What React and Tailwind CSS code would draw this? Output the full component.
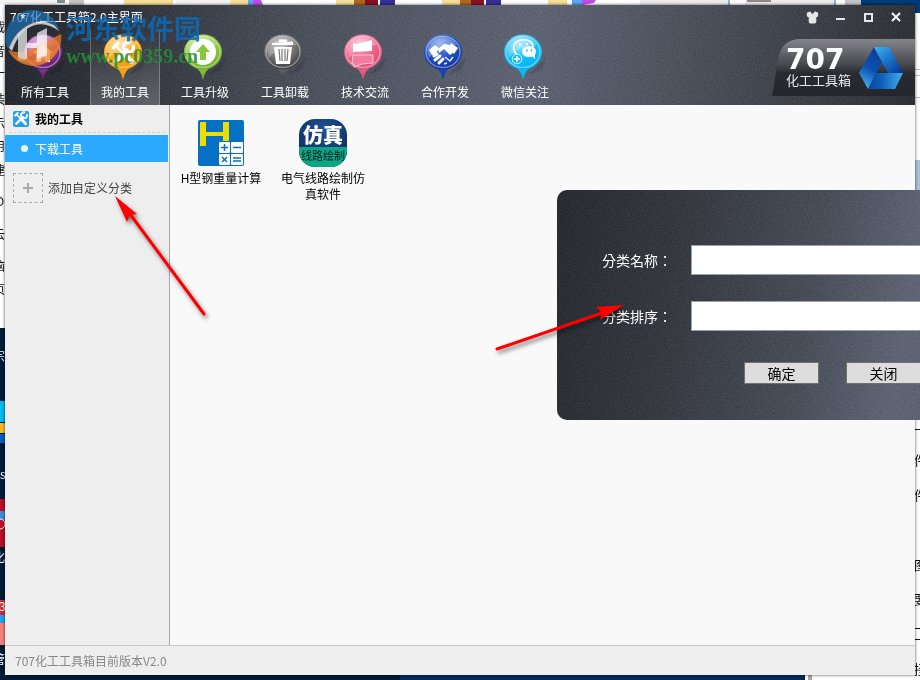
import React, { useState } from "react";
import { Shirt } from "lucide-react";

const pins = [
  { label: "所有工具", light: "#d9a6dd", main: "#8e3a98", dark: "#5d1c68", glyph: "home" },
  { label: "我的工具", light: "#ffd98a", main: "#fba81c", dark: "#f09a08", glyph: "tools" },
  { label: "工具升级", light: "#d5eda0", main: "#8cc63f", dark: "#6fae28", glyph: "up" },
  { label: "工具卸载", light: "#b5b5b5", main: "#6c6c6c", dark: "#3c3c3c", glyph: "trash" },
  { label: "技术交流", light: "#fbb6c9", main: "#ec5f88", dark: "#d9507a", glyph: "chat" },
  { label: "合作开发", light: "#7f9fe8", main: "#1f4fc4", dark: "#12329a", glyph: "hands" },
  { label: "微信关注", light: "#9be6ff", main: "#14bdf8", dark: "#00b4f5", glyph: "wechat" },
];

const tools = [
  { name: "H型钢重量计算", icon: <SteelIcon /> },
  { name: "电气线路绘制仿真软件", icon: <CircuitIcon /> },
];

function Wrenches({ color }) {
  return (
    <g fill="none" stroke={color} strokeLinecap="round">
      <path d="M5 5L14 14" strokeWidth="2.4" />
      <path d="M14 14L19 19" strokeWidth="4.4" />
      <path d="M15 9L5 19" strokeWidth="3.6" />
      <path d="M3 7l4-4" strokeWidth="3" />
      <path d="M21 6a4.500 4.500 0 1 1-4-4" strokeWidth="3" />
    </g>
  );
}

function PinGlyph({ name }) {
  if (name === "home")
    return <path d="M13 20L23 11l10 9h-3v9h-5v-6h-4v6h-5v-9z" fill="#fff" />;
  if (name === "tools")
    return <g transform="translate(10 7) scale(1.12)"><Wrenches color="#fff" /></g>;
  if (name === "up")
    return (
      <g>
        <circle cx="23" cy="19" r="13" fill="#fff" />
        <path d="M23 11l7 8h-4v8h-6v-8h-4z" fill="#8cc63f" />
      </g>
    );
  if (name === "trash")
    return (
      <g>
        <path d="M12 10l21-1.500v3.500H12zM19 9V6.500h8V9" fill="#fff" />
        <path d="M14 14h18l-2 17H16z" fill="#fff" />
        <path d="M19 16l1 12M22 16v12M25 16v12M28 16l-1 12" stroke="#777" strokeWidth="1.200" />
      </g>
    );
  if (name === "chat")
    return (
      <g>
        <path d="M13 10l4 1 15-4v11l-19 1z" fill="#fff" />
        <path d="M13 22h20v8l-11 1-8 3v-3h-2z" fill="#f27c9e" stroke="#ffc7d6" />
      </g>
    );
  if (name === "hands")
    return (
      <g>
        <path d="M9 17l6-5 4 3-4 8-3-1z" fill="#fff" />
        <path d="M31 10l7 5-4 6-5-6z" fill="#fff" />
        <path d="M18 16l6-5 6 1 4 7-4 3-6-6-5 4z" fill="#fff" />
        <path d="M14 23l3-2M15 27l5-4M19 30l4-4" stroke="#fff" strokeWidth="3" strokeLinecap="round" />
        <path d="M24 31l3-1M25 24l5 4 3-4" stroke="#dfe8ff" strokeWidth="1.500" fill="none" />
      </g>
    );
  return (
    <g>
      <path d="M17 21c-5-3-5-12 4-14 7-1 12 2 12 7" fill="none" stroke="#fff" strokeWidth="1.600" />
      <circle cx="20" cy="12" r="1.200" fill="#fff" />
      <circle cx="27" cy="11" r="1.200" fill="#fff" />
      <ellipse cx="29" cy="18.500" rx="7" ry="5.500" fill="#fff" />
      <path d="M31 22l4 4v-5z" fill="#fff" />
      <circle cx="27" cy="17.500" r="1" fill="#14bdf8" />
      <circle cx="31.500" cy="17.500" r="1" fill="#14bdf8" />
      <circle cx="17" cy="26" r="4.800" fill="#14bdf8" stroke="#d5f4ff" />
      <path d="M14 26h6M17 23v6" stroke="#fff" strokeWidth="1.400" />
    </g>
  );
}

function Pin({ pin }) {
  const id = "pin-" + pin.glyph;
  return (
    <svg width="50" height="48" viewBox="0 0 50 48" aria-hidden="true">
      <defs>
        <radialGradient id={id} cx="42%" cy="25%" r="75%">
          <stop offset="0" stopColor={pin.light} />
          <stop offset="0.600" stopColor={pin.main} />
          <stop offset="1" stopColor={pin.dark} />
        </radialGradient>
        <linearGradient id={id + "-tail"} x1="0" y1="0" x2="0" y2="1">
          <stop offset="0" stopColor={pin.main} />
          <stop offset="1" stopColor={pin.dark} />
        </linearGradient>
      </defs>
      <path d="M28 42l18-18-4 13z" fill="#000" opacity="0.120" />
      <path d="M14 34q7 2 9 13q2-11 9-13z" fill={"url(#" + id + "-tail)"} />
      <ellipse cx="23" cy="19" rx="19" ry="17.500" fill={"url(#" + id + ")"} />
      <ellipse cx="23" cy="19" rx="17" ry="15.500" fill="none" stroke="#fff" strokeOpacity="0.400" strokeWidth="1.400" />
      <path d="M7 18a16 14 0 0 1 30-6Q20 12 9 25z" fill="#fff" opacity="0.250" />
      <PinGlyph name={pin.glyph} />
    </svg>
  );
}

function SteelIcon() {
  return (
    <svg width="46" height="46" viewBox="0 0 46 46" aria-hidden="true">
      <rect width="46" height="46" rx="2" fill="#0670c5" />
      <path d="M2 2h6v10h17V2h6v19h-6v-5H8v10H2z" fill="#efdc00" />
      <g fill="#fff">
        <rect x="21" y="22" width="11" height="11" rx="1" />
        <rect x="33" y="22" width="12" height="11" rx="1" />
        <rect x="21" y="34" width="11" height="11" rx="1" />
        <rect x="33" y="34" width="12" height="11" rx="1" />
      </g>
      <path d="M23 27.500h7M26.500 24v7M35 27.500h8M24 37l5 5M29 37l-5 5M35 38h8M35 41h8" stroke="#0670c5" strokeWidth="1.500" />
    </svg>
  );
}

function CircuitIcon() {
  return (
    <span className="flex h-12 w-12 flex-col overflow-hidden rounded-2xl bg-[radial-gradient(circle_at_50%_20%,#1d5090,#0c2450)] text-center">
      <span className="h-7 pt-1 text-[20px] leading-6 font-black text-white">仿真</span>
      <span className="flex-1 bg-[#09a884] text-[11px] leading-4 font-medium whitespace-nowrap text-[#12302f]">线路绘制</span>
    </span>
  );
}

// fine grain laid over the dark metal panels
function Grain() {
  return (
    <svg className="pointer-events-none absolute inset-0 h-full w-full opacity-35 mix-blend-soft-light" aria-hidden="true">
      <filter id="grain">
        <feTurbulence type="fractalNoise" baseFrequency="0.700" numOctaves="2" />
        <feColorMatrix values="1 0 0 0 0  1 0 0 0 0  1 0 0 0 0  0 0 0 0 1" />
      </filter>
      <rect width="100%" height="100%" filter="url(#grain)" />
    </svg>
  );
}

function BrandLogo() {
  return (
    <div className="relative mt-[10px] ml-auto flex h-[57px] w-[143px] shrink-0 items-center">
      <svg className="absolute inset-0" width="143" height="57" viewBox="0 0 143 57" aria-hidden="true">
        <defs>
          <linearGradient id="plate" x1="0" y1="0" x2="0" y2="1">
            <stop offset="0" stopColor="#85868b" />
            <stop offset="0.450" stopColor="#46484e" />
            <stop offset="0.600" stopColor="#2a2b31" />
            <stop offset="1" stopColor="#25262b" />
          </linearGradient>
        </defs>
        <path d="M0 57L7 16Q11 1 27 0H143V57z" fill="url(#plate)" />
      </svg>
      <div className="relative ml-[14px] flex w-[63px] flex-col text-white">
        <span className="font-['DejaVu_Sans',sans-serif] text-[28px] leading-6 font-bold">707</span>
        <span className="text-[13px] leading-4 whitespace-nowrap text-gray-200">化工工具箱</span>
      </div>
      <svg className="relative ml-[10px]" width="44" height="44" viewBox="0 0 44 44" aria-hidden="true">
        <defs>
          <linearGradient id="tri-left" x1="0.600" y1="0" x2="0.300" y2="1">
            <stop offset="0" stopColor="#0a3f9c" />
            <stop offset="0.500" stopColor="#0c50b0" />
            <stop offset="1" stopColor="#43b4ee" />
          </linearGradient>
          <linearGradient id="tri-right" x1="0" y1="0" x2="1" y2="1">
            <stop offset="0" stopColor="#45b4ee" />
            <stop offset="0.500" stopColor="#1873cc" />
            <stop offset="1" stopColor="#04308c" />
          </linearGradient>
          <linearGradient id="tri-base" x1="0" y1="0" x2="1" y2="0">
            <stop offset="0" stopColor="#0b43a2" />
            <stop offset="0.400" stopColor="#1260bd" />
            <stop offset="1" stopColor="#43b0ec" />
          </linearGradient>
        </defs>
        <path d="M15 1L0 27l9 16L23 16z" fill="url(#tri-left)" />
        <path d="M15 1h15l14 26H29z" fill="url(#tri-right)" />
        <path d="M17 27h27l-8 16H9z" fill="url(#tri-base)" />
      </svg>
    </div>
  );
}

// slivers of the desktop that stay visible around the window
function Desktop() {
  const left = [[32, "载"], [56, "音"], [78, "一"], [104, "装"], [128, "示"], [151, "用"], [175, "建"], [239, "云"], [271, "脑"], [294, "页"]];
  const right = [[465, "件"], [500, "件"], [570, "图"], [604, "要"], [674, "接"]];
  return (
    <svg className="absolute inset-0 h-full w-full" aria-hidden="true">
      <rect width="100%" height="100%" fill="#fff" />
      <rect y="328" width="805" height="352" fill="#001a38" />
      <rect x="400" y="675" width="404" height="5" fill="#002b5c" />
      <path d="M808 675h4v5h-4z" fill="#aaa" />
      <path d="M0 0h56v5H0zM176 0h54v5h-54z" fill="#f3f3f3" />
      <path d="M57 0h8v3h-8z" fill="#7d8c96" />
      <path d="M69 0h15v5H69z" fill="#c4c4c4" />
      <path d="M124 0h49v5h-49zM230 0h18v5h-18zM336 0h18v5h-18zM442 0h18v5h-18zM548 0h19v5h-19z" fill="#f8df97" />
      <path d="M248 0h5v5h-5zM572 0h10v5h-10z" fill="#5aa5f5" />
      <path d="M253 0h8l2 5h-10zM582 0h14l-2 3-12 2z" fill="#c04be8" />
      <path d="M354 0h11v5h-11zM460 0h11v5h-11z" fill="#b5651d" />
      <path d="M365 0h13v5h-13zM471 0h13v5h-13z" fill="#8b0f22" />
      <path d="M380 0h15v5h-15zM486 0h15v5h-15z" fill="#34309a" />
      <path d="M640 0h90v5h-90zM745 0h90v5h-90z" fill="#ececec" />
      <path d="M747 0h24v2h-24z" fill="#8a8a8a" />
      <path d="M845 0h16v5h-16z" fill="#c4c4c4" />
      <path d="M728 0h2v5h-2zM834 0h2v5h-2z" fill="#8fb0d0" />
      <rect x="861" width="59" height="13" fill="#003b78" />
      <path d="M915 69.500h5M915 75.500h5M915 97.500h5" stroke="#bbb" />
      <path d="M915 429.500h5M915 628.500h5M915 639.500h5" stroke="#111" />
      <rect x="915" y="160" width="5" height="30" fill="#a9c0d8" />
      <rect y="401" width="5" height="21" fill="#00baf2" />
      <rect y="423" width="5" height="10" fill="#f5b72b" />
      <rect y="434" width="5" height="9" fill="#0a5bc0" />
      <rect y="499" width="5" height="48" fill="#b90f29" />
      <rect y="511" width="5" height="9" fill="#3d8bd7" />
      <circle cx="0" cy="524" r="5" fill="#b90f29" stroke="#fff" />
      <rect y="600" width="5" height="15" fill="#cf2f3c" />
      <rect y="615" width="5" height="8" fill="#22a2ef" />
      <rect y="623" width="5" height="22" fill="#f5817f" />
      {left.map(([y, t]) => <text key={y} x="-7" y={y} fontSize="12" fill="#111">{t}</text>)}
      <text x="-4" y="206" fontSize="12" fill="#111">D</text>
      <g fill="#fff" fontSize="12">
        <text x="-7" y="361">宗</text>
        <text x="0" y="479">s</text>
        <text x="-7" y="562">化</text>
        <text x="-1" y="611">3</text>
        <text x="-7" y="664">管</text>
      </g>
      {right.map(([y, t]) => <text key={y} x="914" y={y} fontSize="13" fill="#111">{t}</text>)}
    </svg>
  );
}

function Watermark() {
  return (
    <div className="pointer-events-none absolute top-[10px] left-[5px] flex opacity-85" aria-hidden="true">
      <svg width="57" height="58" viewBox="0 0 57 58">
        <path d="M3 40Q14 45 28 38T56 24A28 28 0 0 1 3 40z" fill="#f07c1c" opacity="0.850" />
        <path d="M1 33A27.500 27.500 0 0 1 55 22Q50 12 37 11Q14 13 4 38Q1 38 1 33z" fill="#1a72b8" opacity="0.800" />
        <path d="M4 38Q13 14 37 11Q50 13 54 21Q42 12 30 15Q14 20 7 41z" fill="#fff" opacity="0.850" />
        <path d="M13 24l9-6v31q-5 3-9 1zM32 23l10-5v29q-5 4-10 5zM22 33h10v5H22z" fill="#fff" opacity="0.800" />
        <path d="M4 41Q16 52 30 50Q46 46 55 33Q50 54 29 55Q12 54 4 41z" fill="#f58a2c" opacity="0.700" />
        <path d="M18 3l1 2 2 0-2 2 1 2-2-1-2 1 1-2-2-2 2 0z" fill="#d8ecfa" />
      </svg>
      <div className="ml-1 flex flex-col">
        <span className="mt-[2px] text-[27px] leading-8 font-bold text-[#0b69b5]">河东软件园</span>
        <span className="font-['Liberation_Serif',serif] text-[20px] leading-6 font-bold text-[#248f35]">www.pc0359.cn</span>
      </div>
    </div>
  );
}

function Arrows() {
  return (
    <svg className="pointer-events-none absolute inset-0 h-full w-full drop-shadow-[2px_3px_2px_rgba(0,0,0,0.5)]" aria-hidden="true">
      <path d="M204 314L130 214" stroke="#f00" strokeWidth="3" strokeLinecap="round" />
      <path d="M115 196L137 214 130 215 127 222z" fill="#f00" />
      <path d="M497 349L605 312" stroke="#f00" strokeWidth="3" strokeLinecap="round" />
      <path d="M624 305L600 320 602 313 596 307z" fill="#f00" />
    </svg>
  );
}

function CategoryDialog() {
  const [name, setName] = useState("");
  const [order, setOrder] = useState("");

  return (
    <form
      onSubmit={(e) => e.preventDefault()}
      className="absolute top-[190px] left-[557px] w-[560px] overflow-hidden rounded-[10px] bg-[linear-gradient(100deg,#202227_0%,#2c2f36_22%,#3e434e_45%,#555b6b_62%,#434954_100%)] px-[45px] pt-[55px] pb-9 text-sm text-white"
    >
      <Grain />
      <div className="relative flex flex-col gap-[26px] font-['Noto_Sans_CJK_TC',sans-serif]">
        <div className="flex items-center">
          <label htmlFor="cat-name" className="w-[89px]">分类名称：</label>
          <input id="cat-name" value={name} onChange={(e) => setName(e.target.value)} className="h-[30px] flex-1 border border-gray-400 bg-white px-2 text-black" />
        </div>
        <div className="flex items-center">
          <label htmlFor="cat-order" className="w-[89px]">分类排序：</label>
          <input id="cat-order" value={order} onChange={(e) => setOrder(e.target.value)} className="h-[30px] flex-1 border border-gray-400 bg-white px-2 text-black" />
        </div>
      </div>
      <div className="relative mt-[31px] ml-[142px] flex gap-[27px] text-black">
        <button type="submit" className="h-[22px] w-[75px] border border-[#707070] bg-[#dddddd] leading-[18px]">确定</button>
        <button type="button" className="h-[22px] w-[75px] border border-[#707070] bg-[#dddddd] leading-[18px]">关闭</button>
      </div>
    </form>
  );
}

export default function App() {
  const [active, setActive] = useState("我的工具");

  return (
    <div className="relative flex min-h-screen flex-col overflow-hidden p-[5px] font-['Noto_Sans_CJK_SC',sans-serif] text-xs">
      <Desktop />

      <div className="relative flex flex-1 flex-col bg-[#f9f9f9] shadow-[0_0_3px_rgba(0,0,0,0.7)]">
        <header className="relative bg-[linear-gradient(97deg,#1e2026_0%,#282a32_13%,#414752_33%,#545a6a_58%,#434853_74%,#25272d_100%)] text-white">
          <Grain />
          <div className="relative flex h-6 items-center justify-between pr-[11px] pl-[5px]">
            <h1>707化工工具箱2.0主界面</h1>
            <div className="flex items-center gap-3 text-gray-200">
              <button aria-label="换肤" className="flex h-4 w-4 items-center justify-center">
                <Shirt size={13} fill="currentColor" />
              </button>
              <button aria-label="最小化" className="flex h-4 w-4 items-center justify-center">
                <svg width="10" height="10"><path d="M1 7h9" stroke="currentColor" strokeWidth="2" /></svg>
              </button>
              <button aria-label="最大化" className="flex h-4 w-4 items-center justify-center">
                <svg width="10" height="10"><path d="M2 2h7v7H2z" fill="none" stroke="currentColor" strokeWidth="2" /></svg>
              </button>
              <button aria-label="关闭窗口" className="flex h-4 w-4 items-center justify-center">
                <svg width="10" height="10"><path d="M1 1l8 8M9 1L1 9" stroke="#fff" strokeWidth="2" /></svg>
              </button>
            </div>
          </div>
          <div className="relative flex h-[76px]">
            <nav className="flex gap-[10px] pl-[5px]">
              {pins.map((pin) => (
                <button
                  key={pin.label}
                  onClick={() => setActive(pin.label)}
                  className={
                    active === pin.label
                      ? "flex w-[70px] flex-col items-center border-x border-white/25 bg-linear-to-b from-white/0 to-white/20 pt-1"
                      : "flex w-[70px] flex-col items-center border-x border-transparent pt-1"
                  }
                >
                  <Pin pin={pin} />
                  <span className="mt-[3px] leading-4">{pin.label}</span>
                </button>
              ))}
            </nav>
            <BrandLogo />
          </div>
        </header>

        <div className="flex flex-1">
          <aside className="w-[165px] shrink-0 border-r border-[#a8a8a8] bg-[#eeeeee]">
            <h2 className="mx-1 flex h-7 items-center gap-[6px] border-b border-dashed border-[#cfd3cf] pl-1 font-bold text-black">
              <svg width="16" height="16" viewBox="0 0 24 24" aria-hidden="true">
                <rect width="24" height="24" rx="3" fill="#1fa0f5" />
                <Wrenches color="#fff" />
              </svg>
              我的工具
            </h2>
            <a href="#download" className="mt-[2px] mr-px flex h-[27px] items-center gap-[7px] bg-[#2ba8ff] pl-4 text-white">
              <span className="h-[7px] w-[7px] rounded-full bg-[#e4f7e4]" />
              下载工具
            </a>
            <button className="mt-[11px] ml-2 flex items-center gap-[5px] text-[#444]">
              <span className="flex h-[30px] w-[30px] items-center justify-center border border-dashed border-[#aaa]">
                <svg width="10" height="10"><path d="M0 5h10M5 0v10" stroke="#aaa" strokeWidth="2" /></svg>
              </span>
              添加自定义分类
            </button>
          </aside>

          <main className="flex flex-1 items-start gap-3 pt-[14px] pl-[6px]">
            {tools.map((tool) => (
              <button key={tool.name} className="flex w-[90px] flex-col items-center text-black">
                <span className="flex h-12 items-center">{tool.icon}</span>
                <span className="mt-[3px] w-[86px] leading-4">{tool.name}</span>
              </button>
            ))}
          </main>
        </div>

        <footer className="h-[30px] border-t border-[#c8c8c8] bg-[#eeeeee] pl-[10px] leading-[30px] text-[#888]">
          707化工工具箱目前版本V2.0
        </footer>
      </div>

      <CategoryDialog />
      <Arrows />
      <Watermark />
    </div>
  );
}
